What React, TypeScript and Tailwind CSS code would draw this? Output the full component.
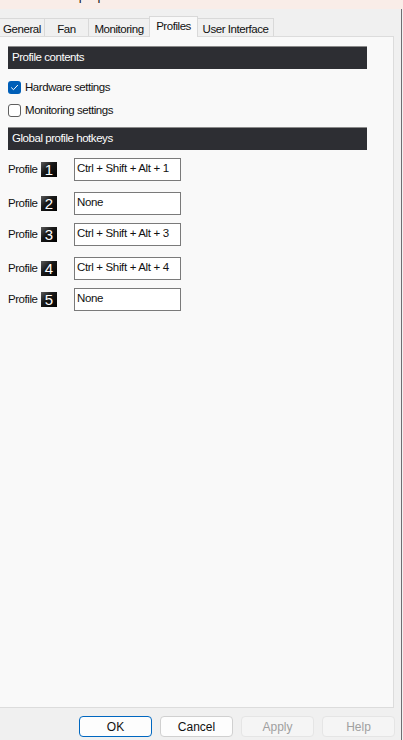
import React from "react";

const tabs = [
  { label: "General", cls: "w-[45px] h-[18px] border-t border-r border-[#d9d9d9] pt-[2px]" },
  { label: "Fan", cls: "w-[44px] h-[18px] border-t border-r border-[#d9d9d9] pt-[2px]" },
  { label: "Monitoring", cls: "w-[60px] h-[18px] border-t border-[#d9d9d9] pt-[2px]" },
  { label: "Profiles", cls: "w-[49px] h-[21px] -mb-px relative z-10 bg-[#f9f9f9] border-t border-l border-r border-[#d9d9d9] pt-[1px]" },
  { label: "User Interface", cls: "w-[76px] h-[18px] border-t border-r border-[#d9d9d9] pt-[2px]" },
];

const hotkeys = [
  { n: "1", value: "Ctrl + Shift + Alt + 1", gap: "mt-[8px]" },
  { n: "2", value: "None", gap: "mt-[11px]" },
  { n: "3", value: "Ctrl + Shift + Alt + 3", gap: "mt-[8px]" },
  { n: "4", value: "Ctrl + Shift + Alt + 4", gap: "mt-[11px]" },
  { n: "5", value: "None", gap: "mt-[8px]" },
];

function SectionHeader({ title }: { title: string }) {
  return (
    <div className="w-[359px] h-[23px] bg-[#2d2e33] border-t border-[#8a8a8a] pl-[4px] flex items-center text-white">
      {title}
    </div>
  );
}

function NumberBadge({ n }: { n: string }) {
  return (
    <div className="w-[16px] h-[15px] flex items-center justify-center bg-[linear-gradient(135deg,#5a5a5a_0%,#1a1a1a_40%,#000_100%)] text-white text-[15px] leading-none tracking-normal font-light">
      {n}
    </div>
  );
}

export default function App() {
  return (
    <div className="relative w-[403px] h-[740px] bg-[#f0f0f0] overflow-hidden text-[11.5px] tracking-[-0.45px] text-[#111] font-['Liberation_Sans',Arial,sans-serif]">
      {/* Title bar, mostly scrolled off */}
      <div className="relative h-[9px] bg-[#f9ede8] overflow-hidden">
        <div className="-mt-[11px] -ml-[16px] text-[13px] leading-[13px] tracking-normal text-[#1a1a1a] whitespace-nowrap">
          MSI Afterburner properties
        </div>
        <div className="absolute right-[12px] top-[-11px] text-[13px] leading-[13px] tracking-normal text-[#1a1a1a]">✕</div>
      </div>
      <div className="absolute left-[401px] top-[9px] bottom-0 w-px bg-[#6e6e72]" />

      {/* Tabs */}
      <div className="mt-[7px] h-[20px] flex items-end">
        {tabs.map((t) => (
          <div key={t.label} className={`flex justify-center ${t.cls}`}>
            {t.label}
          </div>
        ))}
      </div>

      {/* Panel */}
      <div className="-ml-px w-[395px] h-[672px] bg-[#f9f9f9] border border-[#dcdcdc] pt-[9px] pl-[8px]">
        <SectionHeader title="Profile contents" />

        <div className="mt-[12px] flex items-center gap-[4px] h-[13px]">
          <div className="w-[13px] h-[13px] rounded-[3px] bg-[#005fb8] flex items-center justify-center">
            <svg width="9" height="9" viewBox="0 0 9 9" fill="none">
              <path d="M1.5 4.8 L3.5 6.7 L7.6 2.3" stroke="white" strokeWidth="1" strokeLinecap="round" strokeLinejoin="round" />
            </svg>
          </div>
          <span>Hardware settings</span>
        </div>

        <div className="mt-[10px] flex items-center gap-[4px] h-[13px]">
          <div className="w-[13px] h-[13px] rounded-[3px] bg-white border border-[#5f5f5f]" />
          <span>Monitoring settings</span>
        </div>

        <div className="mt-[10px]">
          <SectionHeader title="Global profile hotkeys" />
        </div>

        {hotkeys.map((h) => (
          <div key={h.n} className={`flex items-center h-[23px] ${h.gap}`}>
            <span className="w-[33px]">Profile</span>
            <NumberBadge n={h.n} />
            <div className="ml-[17px] w-[107px] h-[23px] bg-white border border-[#7a7a7a] pl-[2px] pt-[2px] leading-[14px] tracking-[-0.35px]">
              {h.value}
            </div>
          </div>
        ))}
      </div>

      {/* Dialog buttons */}
      <div className="mt-[8px] pl-[79px] flex gap-[8px] text-[12px] tracking-normal">
        <div className="w-[73px] h-[21px] rounded-[4px] border border-[#0067c0] bg-[#fdfdfd] flex items-center justify-center">OK</div>
        <div className="w-[73px] h-[21px] rounded-[4px] border border-[#d0d0d0] bg-[#fdfdfd] flex items-center justify-center">Cancel</div>
        <div className="w-[73px] h-[21px] rounded-[4px] border border-[#e5e5e5] bg-[#f5f5f5] text-[#a0a0a0] flex items-center justify-center">Apply</div>
        <div className="w-[73px] h-[21px] rounded-[4px] border border-[#e5e5e5] bg-[#f5f5f5] text-[#a0a0a0] flex items-center justify-center">Help</div>
      </div>
    </div>
  );
}
